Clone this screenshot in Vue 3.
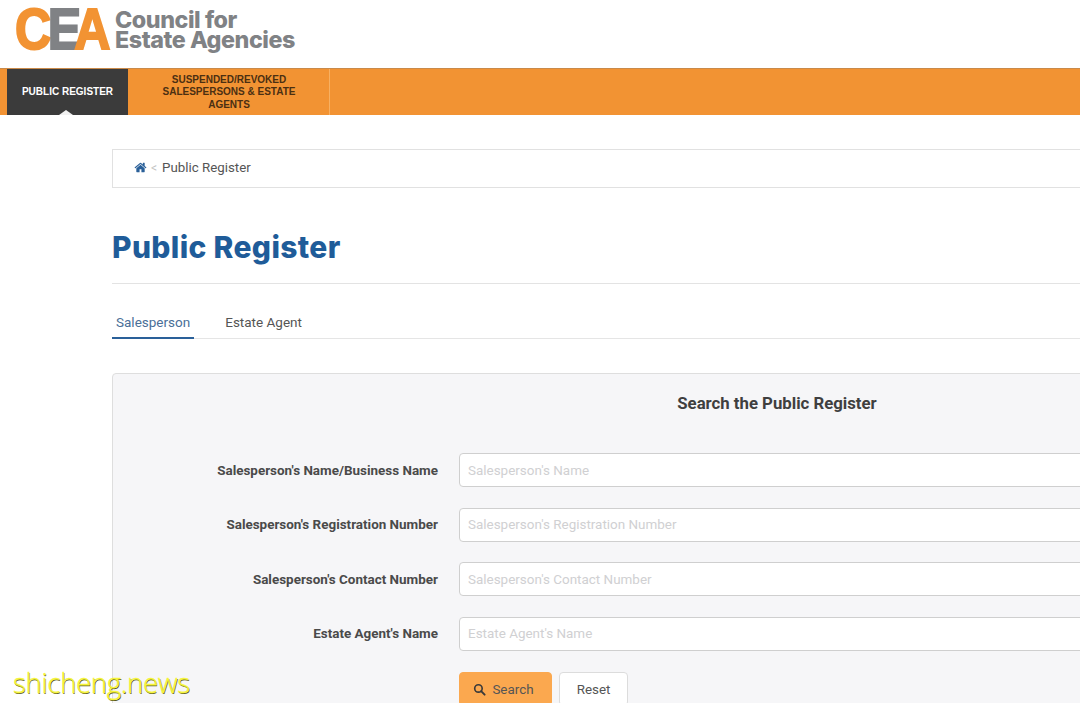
<template>
  <div class="page">
    <header class="site-header">
      <div class="logo">
        <div class="logo-mark"><span class="c">C</span><span class="e">E</span><span class="a">A</span></div>
        <div class="logo-text">Council for<br />Estate Agencies</div>
      </div>
    </header>

    <nav class="main-nav">
      <a class="nav-item active">PUBLIC REGISTER</a>
      <a class="nav-item wide">SUSPENDED/REVOKED SALESPERSONS &amp; ESTATE AGENTS</a>
    </nav>

    <main class="content">
      <div class="breadcrumb">
        <svg class="home" viewBox="0 0 1792 1792"><path fill="#2a6099" d="M1472 992v480q0 26-19 45t-45 19h-384v-384h-256v384h-384q-26 0-45-19t-19-45v-480q0-1 .5-3t.5-3l575-474 575 474q1 2 1 6zm223-69l-62 74q-8 9-21 11h-3q-13 0-21-7l-692-577-692 577q-12 8-24 7-13-2-21-11l-62-74q-8-10-7-23.5t11-21.500l719-599q32-26 76-26t76 26l244 204v-195q0-14 9-23t23-9h192q14 0 23 9t9 23v408l219 182q10 8 11 21.500t-7 23.500z"/></svg>
        <span class="sep">&lt;</span>
        <span>Public Register</span>
      </div>

      <h1 class="title">Public Register</h1>

      <div class="tabs">
        <a class="tab active">Salesperson</a>
        <a class="tab">Estate Agent</a>
      </div>

      <section class="panel">
        <h2 class="panel-title">Search the Public Register</h2>
        <div class="form">
          <div v-for="field in fields" :key="field.label" class="row">
            <label class="label">{{ field.label }}</label>
            <input class="input" type="text" :placeholder="field.placeholder" />
          </div>
          <div class="actions">
            <button class="btn search">
              <svg class="search-icon" viewBox="0 0 16 16"><circle cx="6.7" cy="6.7" r="4.6" fill="none" stroke="#3a3a3a" stroke-width="2" /><path d="M10 10l4.300 4.300" stroke="#3a3a3a" stroke-width="2.400" stroke-linecap="round" /></svg>
              Search
            </button>
            <button class="btn reset">Reset</button>
          </div>
        </div>
      </section>
    </main>

    <div class="watermark">shicheng.news</div>
  </div>
</template>

<script setup>
const fields = [
  { label: "Salesperson's Name/Business Name", placeholder: "Salesperson's Name" },
  { label: "Salesperson's Registration Number", placeholder: "Salesperson's Registration Number" },
  { label: "Salesperson's Contact Number", placeholder: "Salesperson's Contact Number" },
  { label: "Estate Agent's Name", placeholder: "Estate Agent's Name" }
]
</script>

<style>
html,
body {
  overflow: hidden;
  background: #fff;
}
</style>

<style scoped>
.page {
  position: relative;
  width: 1080px;
  height: 703px;
  overflow: hidden;
  background: #fff;
  font-family: Roboto, "Liberation Sans", sans-serif;
  color: #4a4a4a;
}

.site-header {
  height: 68px;
  box-sizing: border-box;
  padding: 4px 0 0 15px;
}

.logo {
  display: flex;
  align-items: center;
  gap: 5px;
}

.logo-mark {
  display: flex;
  width: 95px;
  height: 50px;
  font-family: "Liberation Sans", sans-serif;
  font-weight: 700;
  font-size: 57px;
  line-height: 50px;
  -webkit-text-stroke: 2px currentColor;
  transform: scaleX(0.88);
  transform-origin: left center;
}

.logo-mark .c {
  color: #f29333;
}

.logo-mark .e {
  color: #808285;
  margin-left: -4px;
}

.logo-mark .a {
  color: #f29333;
  margin-left: -8px;
}

.logo-text {
  margin-top: 1px;
  font-family: Inter, sans-serif;
  font-weight: 800;
  font-size: 23.300px;
  line-height: 20px;
  letter-spacing: -0.45px;
  color: #808285;
}

.main-nav {
  display: flex;
  height: 47px;
  padding-left: 7px;
  background: #f29333;
  border-top: 1px solid #c98a4a;
  box-sizing: border-box;
}

.nav-item {
  display: flex;
  align-items: center;
  justify-content: center;
  text-align: center;
  font-family: "Liberation Sans", sans-serif;
  font-size: 10px;
  font-weight: 700;
  line-height: 12.500px;
  color: #4b2f12;
}

.nav-item.active {
  position: relative;
  width: 121px;
  background: #3b3b3b;
  color: #fff;
}

.nav-item.active::after {
  content: "";
  position: absolute;
  left: 52px;
  bottom: 0;
  border: 7px solid transparent;
  border-top: 0;
  border-bottom: 5px solid #f1f1f1;
}

.nav-item.wide {
  width: 201px;
  box-sizing: border-box;
  padding: 1px 26px 0;
  margin-left: 1px;
  border-right: 1px solid #f7b062;
}

.content {
  width: 1330px;
  margin-left: 112px;
  padding-top: 34px;
}

.breadcrumb {
  display: flex;
  align-items: center;
  height: 39px;
  box-sizing: border-box;
  padding: 0 0 2px 21px;
  border: 1px solid #e1e1e1;
  font-size: 13.300px;
  color: #555;
}

.home {
  width: 13px;
  height: 13px;
}

.sep {
  margin: 0 5px 0 4px;
  color: #c4c4c4;
  font-size: 12px;
}

.title {
  margin: 41px 0 0;
  height: 55px;
  box-sizing: border-box;
  font-family: Inter, sans-serif;
  font-size: 30px;
  line-height: 36px;
  font-weight: 800;
  letter-spacing: 0.35px;
  color: #1f5c99;
  border-bottom: 1px solid #e3e3e3;
}

.tabs {
  display: flex;
  height: 55px;
  box-sizing: border-box;
  padding-top: 28px;
  border-bottom: 1px solid #e5e5e5;
}

.tab {
  height: 27px;
  box-sizing: border-box;
  font-size: 13.500px;
  line-height: 20px;
  padding: 0 4px;
  margin-right: 27px;
  color: #555;
}

.tab.active {
  color: #4a6f98;
  border-bottom: 2px solid #2a6099;
}

.panel {
  margin-top: 34px;
  height: 400px;
  background: #f6f6f8;
  border: 1px solid #dedede;
  border-radius: 4px;
}

.panel-title {
  margin: 0;
  padding-top: 19px;
  height: 79px;
  box-sizing: border-box;
  text-align: center;
  font-size: 16.750px;
  line-height: 20px;
  font-weight: 700;
  color: #3f3f3f;
}

.form {
  display: flex;
  flex-direction: column;
  gap: 20.500px;
}

.row {
  display: flex;
  align-items: center;
  gap: 21px;
}

.label {
  width: 325px;
  text-align: right;
  font-size: 13.450px;
  font-weight: 700;
  color: #4a4a4a;
}

.input {
  flex: 1;
  height: 34px;
  box-sizing: border-box;
  padding: 0 8px;
  background: #fff;
  border: 1px solid #cfcfcf;
  border-radius: 4px;
  font-family: inherit;
  font-size: 13.450px;
}

.input::placeholder {
  color: #d0d0d2;
  opacity: 1;
}

.actions {
  display: flex;
  gap: 7px;
  margin-top: 1px;
  padding-left: 346px;
}

.btn {
  height: 34px;
  box-sizing: border-box;
  border-radius: 4px;
  font-family: inherit;
  font-size: 13.400px;
  color: #555;
}

.search {
  display: flex;
  align-items: center;
  justify-content: center;
  gap: 6px;
  width: 93px;
  padding: 0 4px 0 0;
  background: #fba84f;
  border: 1px solid #fba84f;
}

.search-icon {
  width: 13px;
  height: 13px;
}

.reset {
  width: 69px;
  background: #fff;
  border: 1px solid #dcdcdc;
}

.watermark {
  position: absolute;
  left: 13px;
  top: 665px;
  font-family: "Open Sans", sans-serif;
  font-weight: 300;
  font-size: 27.500px;
  line-height: 36px;
  letter-spacing: -0.3px;
  color: #f6f53a;
  -webkit-text-stroke: 0.3px #f6f53a;
  text-shadow: 0.6px 0.6px 0.6px #5a5a20;
}
</style>
